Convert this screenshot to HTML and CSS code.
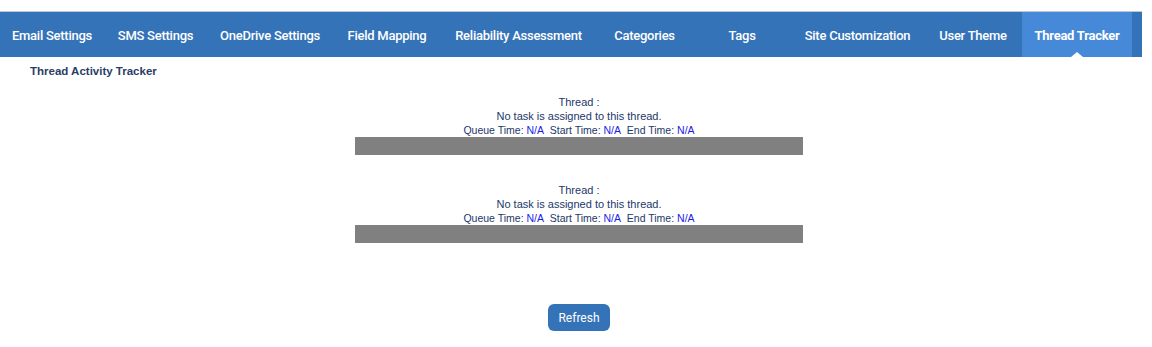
FILE: index.html
```html
<!DOCTYPE html>
<html lang="en">
<head>
<meta charset="utf-8">
<title>Thread Tracker</title>
<link rel="stylesheet" href="styles.css">
</head>
<body>
<nav class="nav">
  <a class="tab">Email Settings</a>
  <a class="tab">SMS Settings</a>
  <a class="tab">OneDrive Settings</a>
  <a class="tab">Field Mapping</a>
  <a class="tab">Reliability Assessment</a>
  <a class="tab">Categories</a>
  <a class="tab">Tags</a>
  <a class="tab">Site Customization</a>
  <a class="tab">User Theme</a>
  <a class="tab active">Thread Tracker</a>
</nav>
<h1 class="title">Thread Activity Tracker</h1>
<main class="tracker">
  <section class="thread">
    <div class="line">Thread :</div>
    <div class="line">No task is assigned to this thread.</div>
    <div class="line times">Queue Time: <span class="val">N/A</span>&nbsp; Start Time: <span class="val">N/A</span>&nbsp; End Time: <span class="val">N/A</span></div>
    <div class="bar"></div>
  </section>
  <section class="thread">
    <div class="line">Thread :</div>
    <div class="line">No task is assigned to this thread.</div>
    <div class="line times">Queue Time: <span class="val">N/A</span>&nbsp; Start Time: <span class="val">N/A</span>&nbsp; End Time: <span class="val">N/A</span></div>
    <div class="bar"></div>
  </section>
  <button class="refresh" type="button">Refresh</button>
</main>
</body>
</html>
```
FILE: styles.css
```css
html, body {
  margin: 0;
  padding: 0;
  background: #ffffff;
  overflow: hidden;
}

body {
  font-family: "Liberation Sans", Arial, sans-serif;
}

.nav {
  margin-top: 11px;
  width: 1142px;
  height: 45px;
  border-top: 1px solid #b9c6d8;
  background: #3573b9;
  display: grid;
  grid-template-columns: 104px 103px 126px 108px 155px 97px 98px 133px 98px 110px;
  box-sizing: content-box;
}

.tab {
  position: relative;
  display: flex;
  align-items: center;
  justify-content: center;
  padding-top: 1px;
  color: #ffffff;
  font-family: Roboto, "Liberation Sans", sans-serif;
  font-weight: 500;
  font-size: 13px;
  letter-spacing: -0.25px;
  white-space: nowrap;
  text-decoration: none;
}

.tab.active {
  background: #4589d8;
  font-weight: 700;
}

.tab.active::after {
  content: "";
  position: absolute;
  bottom: 0;
  left: 50%;
  margin-left: -6px;
  border-left: 6px solid transparent;
  border-right: 6px solid transparent;
  border-bottom: 5px solid #ffffff;
}

.title {
  margin: 7px 0 0 30px;
  font-size: 11.5px;
  line-height: 15px;
  font-weight: 700;
  color: #2b3d66;
}

.tracker {
  padding: 16px 0 0 6px;
  display: flex;
  flex-direction: column;
  align-items: center;
}

.thread {
  width: 448px;
  margin-bottom: 28px;
  text-align: center;
  font-size: 11px;
  line-height: 14px;
  color: #22376a;
}

.times {
  font-size: 10.5px;
}

.val {
  color: #1a1ae6;
}

.bar {
  height: 18px;
  background: #808080;
}

.refresh {
  margin-top: 33px;
  width: 62px;
  height: 27px;
  border: none;
  border-radius: 6px;
  background: #3573b9;
  color: #ffffff;
  font-family: Roboto, "Liberation Sans", sans-serif;
  font-size: 12px;
  padding: 0;
}
```
